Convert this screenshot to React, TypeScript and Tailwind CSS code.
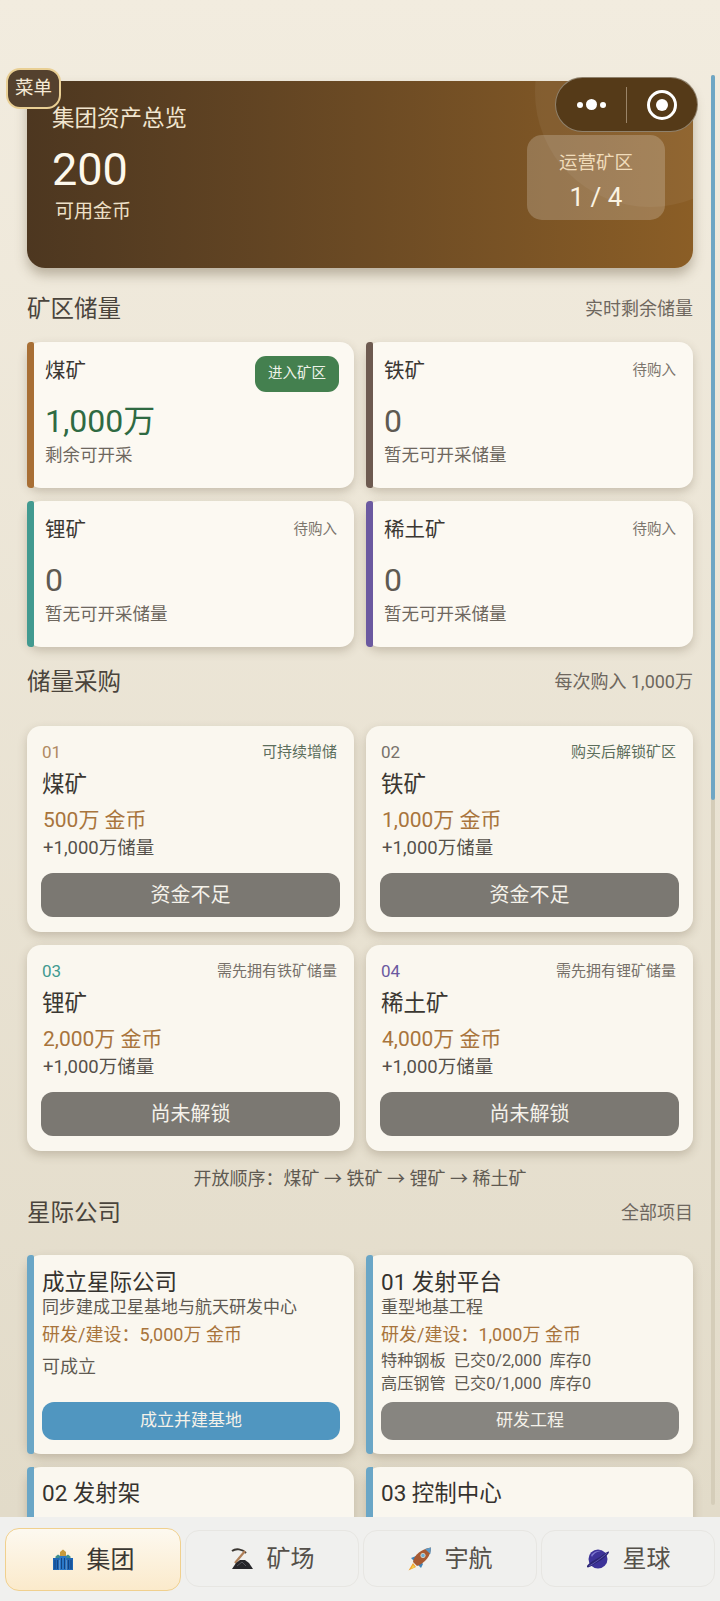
const font = "font-['Roboto','Noto_Sans_CJK_SC',sans-serif]"

const reserves = [
  { name: '煤矿', bar: 'bg-[#a86f35]', value: '1,000万', desc: '剩余可开采', active: true },
  { name: '铁矿', bar: 'bg-[#6d5a50]', value: '0', desc: '暂无可开采储量' },
  { name: '锂矿', bar: 'bg-[#429a90]', value: '0', desc: '暂无可开采储量' },
  { name: '稀土矿', bar: 'bg-[#6b59a0]', value: '0', desc: '暂无可开采储量' },
]

const purchases = [
  { no: '01', noColor: 'text-[#b08a62]', tag: '可持续增储', tagColor: 'text-[#5c6e5c]', name: '煤矿', price: '500万 金币', action: '资金不足' },
  { no: '02', noColor: 'text-[#77716a]', tag: '购买后解锁矿区', tagColor: 'text-[#5c6e5c]', name: '铁矿', price: '1,000万 金币', action: '资金不足' },
  { no: '03', noColor: 'text-[#429a90]', tag: '需先拥有铁矿储量', tagColor: 'text-[#77716a]', name: '锂矿', price: '2,000万 金币', action: '尚未解锁' },
  { no: '04', noColor: 'text-[#6b59a0]', tag: '需先拥有锂矿储量', tagColor: 'text-[#77716a]', name: '稀土矿', price: '4,000万 金币', action: '尚未解锁' },
]

const SectionHead = ({ title, right, className }: { title: string; right: string; className: string }) => (
  <div className={`flex items-center justify-between ${className}`}>
    <h2 className="text-[23.5px] leading-[32px] text-[#4a443c]">{title}</h2>
    <span className="text-[18px] leading-[24px] text-[#6e675e]">{right}</span>
  </div>
)

const ReserveCard = ({ item }: { item: (typeof reserves)[number] }) => (
  <div className="relative h-[146px] rounded-[14px] bg-[#fcf9f2] pl-[18px] pr-[15px] pt-[14px] shadow-[0_4px_10px_rgba(90,75,50,0.25)]">
    <div className={`absolute left-0 top-0 h-full w-[7px] rounded-l-[4px] rounded-r-[2px] ${item.bar}`} />
    <div className="flex h-[36px] items-start justify-between">
      <span className="text-[20.5px] leading-[30px] text-[#3b3732]">{item.name}</span>
      {item.active ? (
        <span className="flex h-[36px] w-[84px] items-center justify-center rounded-[11px] bg-[#44804f] text-[14.5px] text-[#eef3ea]">进入矿区</span>
      ) : (
        <span className="pr-[2px] pt-[4px] text-[14.5px] leading-[22px] text-[#7b756c]">待购入</span>
      )}
    </div>
    <div className={`mt-[9px] text-[32px] leading-[40px] ${item.active ? 'text-[#2f6a42]' : 'text-[#5e5a52]'}`}>{item.value}</div>
    <div className="mt-[2px] text-[17.5px] leading-[24px] text-[#6e675e]">{item.desc}</div>
  </div>
)

const PurchaseCard = ({ item }: { item: (typeof purchases)[number] }) => (
  <div className="h-[206px] rounded-[14px] bg-[#faf7ef] px-[14px] pt-[15px] shadow-[0_4px_10px_rgba(90,75,50,0.25)]">
    <div className="flex items-center justify-between pr-[3px]">
      <span className={`pl-px text-[17px] leading-[22px] ${item.noColor}`}>{item.no}</span>
      <span className={`text-[15px] leading-[22px] ${item.tagColor}`}>{item.tag}</span>
    </div>
    <div className="mt-[6px] pl-px text-[22.5px] leading-[31px] text-[#3b3732]">{item.name}</div>
    <div className="mt-[5px] pl-[2px] text-[21px] leading-[30px] text-[#a8743c]">{item.price}</div>
    <div className="pl-[2px] text-[18.5px] leading-[27px] text-[#55504a]">+1,000万储量</div>
    <button className="mt-[11px] h-[44px] w-full rounded-[12px] bg-[#7b7872] text-[20px] text-[#f5f2ea]">{item.action}</button>
  </div>
)

const CompanyCard = ({ title, sub, cost, children, action, actionColor }: { title: string; sub: string; cost: string; children: React.ReactNode; action: string; actionColor: string }) => (
  <div className="relative flex h-[199px] flex-col rounded-[14px] bg-[#faf7ef] pl-[15px] pr-[14px] pt-[13px] shadow-[0_4px_10px_rgba(90,75,50,0.25)]">
    <div className="absolute left-0 top-0 h-full w-[7px] rounded-l-[4px] rounded-r-[2px] bg-[#6aa6c6]" />
    <div className="text-[22.5px] leading-[29px] text-[#35322e]">{title}</div>
    <div className="text-[17px] leading-[21px] text-[#5f5a52]">{sub}</div>
    <div className="mt-[4px] text-[18px] leading-[25px] text-[#a8743c]">{cost}</div>
    <div className="flex-1 pt-[7px]">{children}</div>
    <button className={`mb-[14px] h-[38px] w-full rounded-[12px] text-[17px] text-[#f5f2ea] ${actionColor}`}>{action}</button>
  </div>
)

const CutCard = ({ title }: { title: string }) => (
  <div className="relative h-[80px] rounded-t-[14px] bg-[#faf7ef] pl-[15px] pt-[11px] shadow-[0_4px_10px_rgba(90,75,50,0.25)]">
    <div className="absolute left-0 top-0 h-full w-[7px] rounded-l-[4px] bg-[#6aa6c6]" />
    <div className="text-[22.5px] leading-[30px] text-[#35322e]">{title}</div>
  </div>
)

const GroupIcon = () => (
  <svg width="22" height="22" viewBox="0 0 22 22">
    <path d="M8 3 11 0.5 14 3 14 9H8Z" fill="#c79a3c" />
    <path d="M3.5 7.5 6 5.5 9 7.5 9 11H3.5Z" fill="#3f8f8f" />
    <path d="M13 7.5 16 5.5 18.5 7.5 18.5 11H13Z" fill="#3f8f8f" />
    <rect x="1" y="9" width="6.5" height="12" fill="#1f66b5" />
    <rect x="7.5" y="7" width="7" height="14" fill="#2a78c8" />
    <rect x="14.5" y="9" width="6.5" height="12" fill="#1f66b5" />
    <path d="M3 11v9M5.5 11v9M9.5 9v11M12.5 9v11M16.5 11v9M19 11v9" stroke="#123f7a" strokeWidth="0.9" />
  </svg>
)

const MineIcon = () => (
  <svg width="24" height="24" viewBox="0 0 24 24">
    <path d="M2 4C6 1 12 2 16 6" fill="none" stroke="#3b3732" strokeWidth="2" />
    <path d="M15 4 5 16" stroke="#b08058" strokeWidth="2.2" />
    <path d="M2 22 6 16 10 13 15 13 19 16 23 22Z" fill="#26262a" />
    <path d="M7 19 12 15 16 19" fill="none" stroke="#55565c" strokeWidth="1" />
  </svg>
)

const RocketIcon = () => (
  <svg width="24" height="24" viewBox="0 0 24 24">
    <path d="M5 16 0.5 23.5 8 20Z" fill="#f3a02e" />
    <path d="M5 18 3 22 7 20Z" fill="#f6d04a" />
    <path d="M3 11 8 9 15 17 13 21Z" fill="#3f82b8" />
    <path d="M5 15C6 8 13 2 23 0.5 23 9 17 16 9 19Z" fill="#a85a33" />
    <path d="M17 2 23 0.5 22.4 7Z" fill="#5b9ac8" />
    <circle cx="15" cy="8.5" r="2.2" fill="#6db0d8" stroke="#e9d9c5" strokeWidth="0.8" />
  </svg>
)

const PlanetIcon = () => (
  <svg width="24" height="24" viewBox="0 0 24 24">
    <circle cx="12" cy="12" r="9.5" fill="#3d3399" />
    <path d="M5 8C8 4 13 3 16 4 12 4 8 6 6 10Z" fill="#7e78cf" />
    <path d="M1 20C0 18 8 13 12 11S23 3 23 5 16 13 12 15 2 22 1 20Z" fill="#2b2573" />
    <path d="M3 19C7 17 17 10 21 6" fill="none" stroke="#6a63c0" strokeWidth="0.8" />
  </svg>
)

const tabs = [
  { label: '集团', icon: <GroupIcon />, active: true },
  { label: '矿场', icon: <MineIcon /> },
  { label: '宇航', icon: <RocketIcon /> },
  { label: '星球', icon: <PlanetIcon /> },
]

export default function App() {
  return (
    <div className={`relative flex h-[1601px] w-[720px] flex-col overflow-hidden bg-[#f0f0ee] ${font}`}>
      <main className="h-[1518px] overflow-hidden bg-gradient-to-b from-[#f2ecdf] to-[#e2dbc9] px-[27px] pt-[81px]">
        <section className="relative h-[187px] overflow-hidden rounded-[18px] bg-gradient-to-r from-[#4d3720] to-[#8b5e26] pl-[25px] pt-[22px] shadow-[0_7px_12px_rgba(90,75,50,0.35)]">
          <div className="absolute right-[-72px] top-[-104px] h-[230px] w-[230px] rounded-full bg-[#ffffff]/[0.05]" />
          <div className="text-[22.5px] leading-[30px] text-[#f1e5cf]">集团资产总览</div>
          <div className="mt-[9px] text-[45px] leading-[56px] text-[#fdf8ec]">200</div>
          <div className="mt-[1px] pl-[3px] text-[19px] leading-[26px] text-[#eee0c8]">可用金币</div>
          <div className="absolute right-[28px] top-[54px] flex h-[85px] w-[138px] flex-col items-center rounded-[15px] bg-[#ffffff]/[0.2] pt-[15px]">
            <div className="text-[18.5px] leading-[26px] text-[#f0dcba]">运营矿区</div>
            <div className="mt-[5px] text-[26px] leading-[32px] text-[#fbf3e2]">1 / 4</div>
          </div>
        </section>

        <SectionHead title="矿区储量" right="实时剩余储量" className="mt-[25px] h-[32px]" />
        <div className="mt-[17px] grid grid-cols-2 gap-x-[12px] gap-y-[13px]">
          {reserves.map((item) => (
            <ReserveCard key={item.name} item={item} />
          ))}
        </div>

        <SectionHead title="储量采购" right="每次购入 1,000万" className="mt-[19px] h-[32px]" />
        <div className="mt-[28px] grid grid-cols-2 gap-x-[12px] gap-y-[13px]">
          {purchases.map((item) => (
            <PurchaseCard key={item.no} item={item} />
          ))}
        </div>

        <div className="mt-[16px] text-center text-[18px] leading-[24px] text-[#5f5a52]">开放顺序：煤矿 → 铁矿 → 锂矿 → 稀土矿</div>

        <SectionHead title="星际公司" right="全部项目" className="mt-[6px] h-[32px]" />
        <div className="mt-[26px] grid grid-cols-2 gap-x-[12px] gap-y-[13px]">
          <CompanyCard title="成立星际公司" sub="同步建成卫星基地与航天研发中心" cost="研发/建设：5,000万 金币" action="成立并建基地" actionColor="bg-[#5096c0]">
            <div className="text-[18px] leading-[26px] text-[#5f5a52]">可成立</div>
          </CompanyCard>
          <CompanyCard title="01 发射平台" sub="重型地基工程" cost="研发/建设：1,000万 金币" action="研发工程" actionColor="bg-[#878580]">
            <div className="-mt-[4px] text-[16.2px] leading-[22.5px] text-[#5f5a52]">特种钢板&nbsp;&nbsp;已交0/2,000&nbsp;&nbsp;库存0</div>
            <div className="text-[16.2px] leading-[22.5px] text-[#5f5a52]">高压钢管&nbsp;&nbsp;已交0/1,000&nbsp;&nbsp;库存0</div>
          </CompanyCard>
          <CutCard title="02 发射架" />
          <CutCard title="03 控制中心" />
        </div>
      </main>

      <nav className="relative z-10 flex flex-1 gap-[4px] bg-[#f0f0ee] px-[5px] pt-[11px]">
        {tabs.map((tab) => (
          <div
            key={tab.label}
            className={`flex items-center justify-center gap-[13px] rounded-[14px] border text-[24px] ${
              tab.active
                ? 'mb-[10px] mt-0 h-[63px] w-[176px] border-[#f0d08e] bg-gradient-to-b from-[#fdf9f0] to-[#fbeacb] text-[#3b3732]'
                : 'mt-[2px] h-[57px] flex-1 border-[#e7e6e2] text-[#55504a]'
            }`}
          >
            {tab.icon}
            <span>{tab.label}</span>
          </div>
        ))}
      </nav>

      {/* scrollbar */}
      <div className="absolute left-[711px] top-[75px] h-[1430px] w-[4px] rounded-full bg-[#d5cdb9]">
        <div className="h-[725px] w-full rounded-full bg-[#6ea6c4]" />
      </div>

      {/* menu badge */}
      <div className="absolute left-[6px] top-[68px] flex h-[41px] w-[55px] items-center justify-center rounded-[14px] border-2 border-[#e9cf94] bg-[#54412e] text-[18.5px] text-[#f5ead6]">
        菜单
      </div>

      {/* wechat capsule */}
      <div className="absolute left-[555px] top-[77px] flex h-[55px] w-[143px] items-center rounded-full border border-[#a8a090]/70 bg-[#553a18]">
        <div className="flex h-full w-[70px] items-center justify-center gap-[3px]">
          <span className="h-[6px] w-[6px] rounded-full bg-white" />
          <span className="h-[11px] w-[11px] rounded-full bg-white" />
          <span className="h-[6px] w-[6px] rounded-full bg-white" />
        </div>
        <div className="h-[36px] w-px bg-[#9a8468]" />
        <div className="flex flex-1 items-center justify-center">
          <div className="flex h-[30px] w-[30px] items-center justify-center rounded-full border-[3px] border-white">
            <span className="h-[12px] w-[12px] rounded-full bg-white" />
          </div>
        </div>
      </div>
    </div>
  )
}
